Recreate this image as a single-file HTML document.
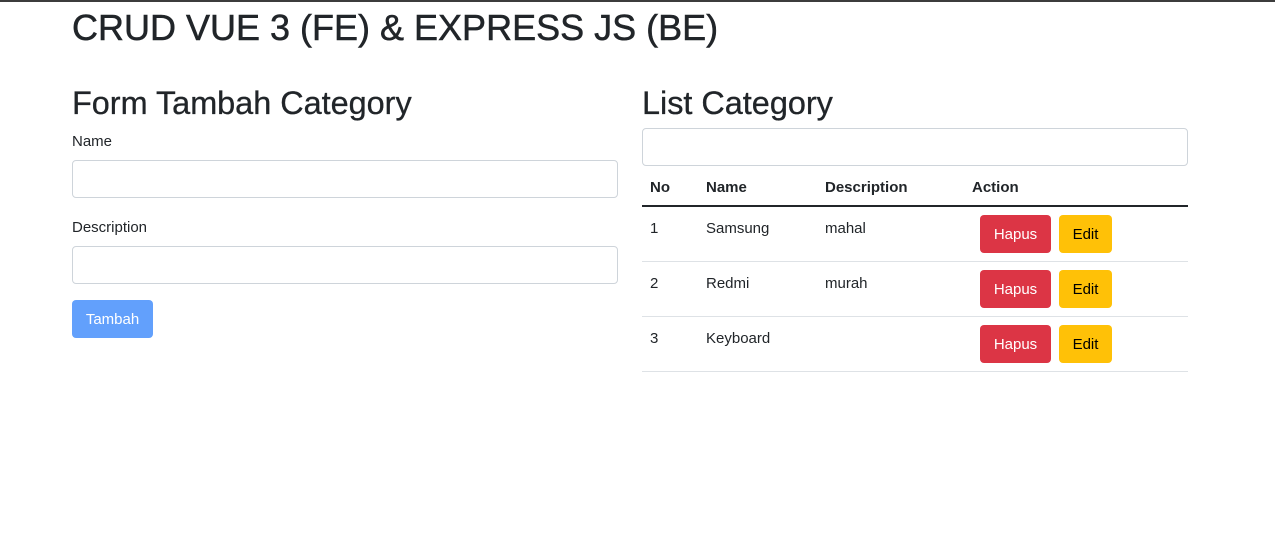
<!DOCTYPE html>
<html><head><meta charset="utf-8"><style>
*{box-sizing:border-box;margin:0;padding:0}
body{width:1275px;height:549px;background:#fff;font-family:"Liberation Sans",sans-serif;color:#212529;position:relative;overflow:hidden}
.a{position:absolute;white-space:nowrap}
h1{font-size:36px;font-weight:500;line-height:48px;-webkit-text-stroke:0.5px #212529}
h2{font-size:32.4px;font-weight:500;line-height:38px;-webkit-text-stroke:0.3px #212529}
.lbl{font-size:15px;line-height:20px}
.inp{position:absolute;border:1px solid #ced4da;border-radius:4px;background:#fff;height:38px}
.btn{position:absolute;height:38px;border-radius:4px;font-size:15px;line-height:40px;text-align:center}
.th{font-size:15px;font-weight:bold;line-height:20px}
.td{font-size:15px;line-height:20px}
.hl{position:absolute;left:642px;width:546px;height:1px;background:#dee2e6}
</style></head><body>
<div class="a" style="left:0;top:0;width:1275px;height:2px;background:#3c3c3c"></div>
<h1 class="a" style="left:72px;top:4px">CRUD VUE 3 (FE) &amp; EXPRESS JS (BE)</h1>
<h2 class="a" style="left:72px;top:84px">Form Tambah Category</h2>
<div class="a lbl" style="left:72px;top:132px">Name</div>
<div class="inp" style="left:72px;top:160px;width:546px"></div>
<div class="a lbl" style="left:72px;top:218px">Description</div>
<div class="inp" style="left:72px;top:246px;width:546px"></div>
<div class="btn" style="left:72px;top:300px;width:81px;background:#62a0fc;color:#fff">Tambah</div>

<h2 class="a" style="left:642px;top:84px">List Category</h2>
<div class="inp" style="left:642px;top:128px;width:546px"></div>
<div class="a th" style="left:650px;top:178px">No</div>
<div class="a th" style="left:706px;top:178px">Name</div>
<div class="a th" style="left:825px;top:178px">Description</div>
<div class="a th" style="left:972px;top:178px">Action</div>
<div class="hl" style="top:205px;height:2px;background:#212529"></div>

<div class="a td" style="left:650px;top:219px">1</div>
<div class="a td" style="left:706px;top:219px">Samsung</div>
<div class="a td" style="left:825px;top:219px">mahal</div>
<div class="btn" style="left:980px;top:215px;width:71px;background:#dc3545;color:#fff">Hapus</div>
<div class="btn" style="left:1059px;top:215px;width:53px;background:#ffc107;color:#000">Edit</div>
<div class="hl" style="top:261px"></div>

<div class="a td" style="left:650px;top:274px">2</div>
<div class="a td" style="left:706px;top:274px">Redmi</div>
<div class="a td" style="left:825px;top:274px">murah</div>
<div class="btn" style="left:980px;top:270px;width:71px;background:#dc3545;color:#fff">Hapus</div>
<div class="btn" style="left:1059px;top:270px;width:53px;background:#ffc107;color:#000">Edit</div>
<div class="hl" style="top:316px"></div>

<div class="a td" style="left:650px;top:329px">3</div>
<div class="a td" style="left:706px;top:329px">Keyboard</div>
<div class="btn" style="left:980px;top:325px;width:71px;background:#dc3545;color:#fff">Hapus</div>
<div class="btn" style="left:1059px;top:325px;width:53px;background:#ffc107;color:#000">Edit</div>
<div class="hl" style="top:371px"></div>
</body></html>
